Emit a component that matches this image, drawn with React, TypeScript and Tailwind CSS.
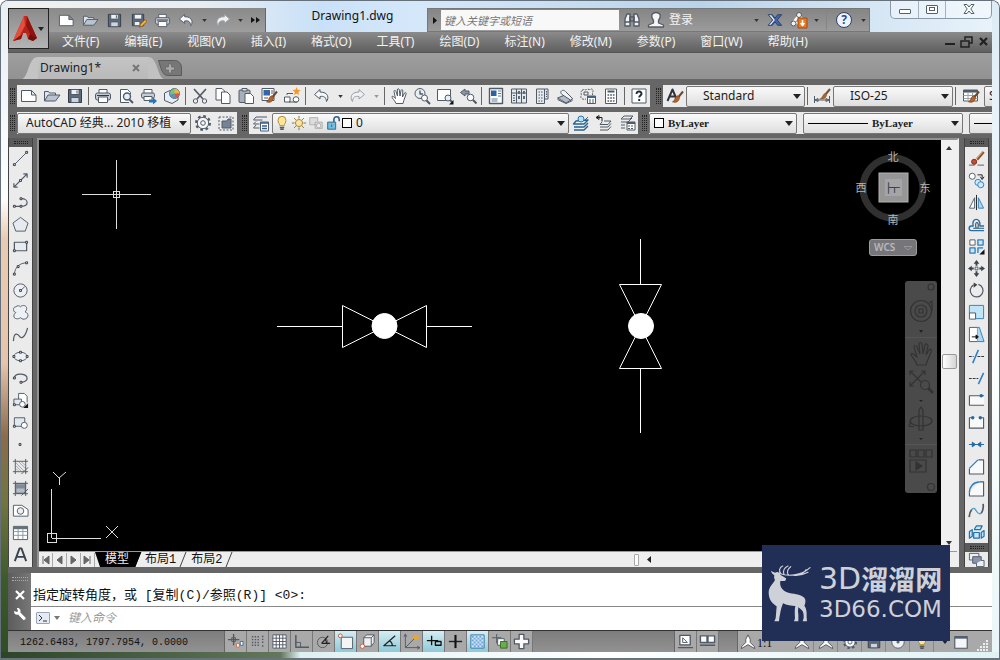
import React from "react";

type Kids = { children?: React.ReactNode };

function Ic({ children, className = "size-[18px]", box = 18 }: Kids & { className?: string; box?: number }) {
  return (
    <svg viewBox={`0 0 ${box} ${box}`} className={`${className} shrink-0`} fill="none" stroke="#515b67" strokeWidth="1" strokeLinejoin="round" aria-hidden="true">
      {children}
    </svg>
  );
}

const Sq = ({ x, y }: { x: number; y: number }) => <rect x={x - 1} y={y - 1} width="2" height="2" fill="#fff" stroke="#2f3842" />;

const Brush = () => (
  <g>
    <path d="M17 4.500 12.500 10" stroke="#6b4a30" strokeWidth="2" />
    <path d="M12.500 9c1.500 1 1 4-1 5.400-1.400 1-3.500 1.200-5 .4 1.800-.7 2-1.800 2.500-3.200.6-1.700 2-3.200 3.500-2.600z" fill="#b5642a" stroke="#7a3f18" strokeWidth=".7" />
  </g>
);

const icons: Record<string, React.ReactNode> = {
  new: <path d="M1.500 3.500h10l4.500 4.500v6.500h-14.500zM11.500 3.500V8H16" fill="#fff" />,
  open: <><path d="M1.500 14V4.500h4l1 1.500h6V8" fill="#dfe5ec" /><path d="M1.500 14 5 8h12l-4.500 6z" fill="#b9c4d0" /></>,
  save: <><path d="M2.500 2.500h13v13h-13z" fill="#5e6b7c" stroke="#333c48" /><path d="M5 2.500h8v5H5z" fill="#eef2f6" /><path d="M5 10.500h8v5H5z" fill="#cdd5de" /><path d="M11 3.500v3" /></>,
  saveAs: <><path d="M2.500 2.500h12v12h-12z" fill="#5e6b7c" stroke="#333c48" /><path d="M4.500 2.500h8v5h-8zM4.500 10h6v4.500h-6z" fill="#eef2f6" /><path d="m10 16 1-3 5-5 2 2-5 5z" fill="#f4b544" stroke="#8a5a10" /></>,
  print: <><path d="M5 6V2.500h8V6" fill="#fff" /><rect x="1.500" y="6" width="15" height="7" rx="2" fill="#c5ccd5" /><path d="M4.500 10h9v5.500h-9z" fill="#fff" /><path d="M3 8.500h12" stroke="#313a45" /></>,
  preview: <><path d="M12 15.500H3.500v-13h7l3 3V7" fill="#fff" /><circle cx="10" cy="9.500" r="3.500" fill="#e3f0f8" strokeWidth="1.400" /><path d="m12.500 12.500 3.500 3.500" strokeWidth="2" /></>,
  publish: <><path d="M4 6V2.500h8V6" fill="#fff" /><rect x="1.500" y="6" width="13" height="5" rx="1.500" fill="#c5ccd5" /><path d="M4 9.500h8v4H4z" fill="#fff" /><path d="M9 12.500h4v-2l4 3.500-4 3.500v-2H9z" fill="#2673b8" stroke="none" /></>,
  threeD: <><path d="M1.500 6 7 3.500l8 2V13l-6 3.500-7.500-3z" fill="#e7edf2" /><circle cx="11.500" cy="6.500" r="5" fill="#7fc17a" stroke="#51708a" /><path d="M11.500 1.700a4.800 4.800 0 0 1 4.800 4.800h-4.800z" fill="#eab83e" stroke="none" /><path d="M11.500 6.500h4.800a4.800 4.800 0 0 1-4.800 4.800z" fill="#dd5548" stroke="none" /><path d="M11.500 6.500v4.800A4.800 4.800 0 0 1 7 7.500z" fill="#4c93d4" stroke="none" /></>,
  cut: <><path d="m3 2 9 10M15 2 6 12" strokeWidth="1.700" /><circle cx="4.500" cy="14" r="2.200" /><circle cx="13.500" cy="14" r="2.200" /></>,
  copy: <><path d="M2 1.500h6l2.500 2.500v9H2z" fill="#fff" /><path d="M7.500 5h5.500l3 3v8.500H7.500z" fill="#fff" /></>,
  paste: <><rect x="2" y="3" width="11" height="12.500" rx="1" fill="#a7b0ba" /><path d="M5 1.500h5V4H5z" fill="#e3e6ea" /><path d="M8 6.500h5.500l3 3v7H8z" fill="#fff" /></>,
  match: <><path d="M2 1.500h12v12H2z" fill="#fff" /><path d="M3.500 3h6.500v5.500H3.500z" fill="#2f67a8" stroke="none" /><path d="M11 4h2M11 6h2M4 11h4" /><Brush /></>,
  block: <><path d="M1.500 10H7v5H1.500zM4 8V6.500h6" fill="#fff" /><circle cx="13" cy="12.500" r="2.800" fill="#fff" /><path d="M6 15h8" /><path d="m13.500 0 1.200 2.800 3 .2-2.300 2 .6 3-2.500-1.500L11 8l.8-3-2.300-2 3-.2z" fill="#f09a2b" stroke="none" /></>,
  undo: <path d="M7 2.500 1.500 7.500 7 12V9.500c4-.6 6 .5 6.500 5 2.500-3 2.300-9.500-6.500-9.500z" fill="#f5f7f9" />,
  redo: <path d="m11 2.500 5.500 5L11 12V9.500c-4-.6-6 .5-6.500 5C2 11.500 2.200 5 11 5z" fill="#eef0f2" stroke="#9aa0a6" />,
  pan: <path d="M6 16.500c-1-3-4.500-5.500-4-7 .8-1 2.500 1 3.500 2L4 4.500c0-1.500 1.500-1.500 2 0L7.500 9 7.300 3c0-1.700 1.800-1.700 2 0L10 9l1-5.500c.4-1.500 2-1 1.800.5L12.500 10l2-4c.8-1 2-.3 1.600 1l-2.300 6.500-.8 3z" fill="#fff" />,
  zoomTime: <><circle cx="7" cy="6.500" r="5" fill="#e9eef2" /><path d="M7 3.500v3.500h3" strokeWidth="1.400" /><circle cx="11.500" cy="11" r="3" fill="#f9fbfc" /><path d="m13.500 13.500 3.500 3.500" strokeWidth="2" /></>,
  zoomWin: <><path d="M1.500 2.500h13v11h-13z" fill="#fff" /><circle cx="12" cy="11" r="3" fill="#e9eef2" /><path d="m14 13 2 2" strokeWidth="2" /><path d="M17.500 13v4.500H13z" fill="#111" stroke="none" /></>,
  zoomPrev: <><path d="M6 2 1.500 5.500 6 9V7h4V4H6z" fill="#8a95a2" /><circle cx="11.500" cy="10.500" r="3.300" fill="#f9fbfc" /><path d="m14 13 3.500 3.500" strokeWidth="2" /></>,
  props: <><path d="M2.500 1.500h13v15h-13z" fill="#fff" strokeWidth="1.400" /><path d="M4 3.500h5.500V9H4z" fill="#2b62a4" stroke="none" /><path d="M11 4h3M11 6.500h3M11 9h3M4.500 12h6M4.500 14h6" stroke="#4f7dab" /></>,
  design: <><path d="M1.500 2h15v14h-15z" fill="#e4e9ee" /><path d="M6.500 2v14M11.500 2v14M1.500 6h15M3 8.500h2M3 11h2M3 13.500h2" /><path d="M8 4h2v3H8zM13 4h2v3h-2zM8 9h2v3H8zM13 9h2v3h-2z" fill="#5d6c7d" stroke="none" /></>,
  palette: <><path d="M3.500 2h8v14.500h-8zM11.500 2H15v10h-3.500" fill="#e4e9ee" /><path d="M5.500 5h4M5.500 8h4M5.500 11h4M5.500 14h4M13.500 4v6" strokeDasharray="1.500 1" /></>,
  sheets: <><path d="M1.500 11 9 8l7.500 4-6.500 4z" fill="#b3bcc6" /><path d="M5 4.500C7 2 9 4 10 5l6.500 6.500-2 1.500L6 7.500c-1-1-1.500-2-1-3z" fill="#f2f4f6" /><path d="M1.500 12.500l8.500 4 6.500-3" /></>,
  markup: <><path d="M3 3.500c2-2 3 0 4.500-1 2-1 3 1 5-.5 1.500 0 2 2 1 3.500V8M3 3.500C1 5 3 7 2 9s1.500 4 5 3" strokeDasharray="2 1" /><path d="M5 5h4v3H5z" /><path d="M8.500 9h8v7.500h-8z" fill="#fff" /><path d="M8.500 10h8" strokeWidth="2" stroke="#41638b" /><path d="M10 13h2m1 0h2m-5 2h2m1 0h2" /></>,
  calc: <><path d="M3.500 2h11v14.500h-11z" fill="#fff" /><path d="M5.500 4.500h7" strokeWidth="2" /><path d="M5.500 8h7M5.500 11h7M5.500 14h7" strokeWidth="1.600" strokeDasharray="1.700 1" /></>,
  help: <><rect x="2" y="2" width="14" height="14" fill="#fff" /><path d="M6.500 7c0-3.500 5.500-3 5 0-.2 1.500-2.300 1.500-2.300 3.500M9.200 12v2" strokeWidth="1.900" stroke="#222b38" /></>,
  textStyle: <><path d="M1.500 14 6.500 2.500 11 13M3.500 9.500h6" stroke="#2d3540" strokeWidth="2" /><Brush /></>,
  dimStyle: <><path d="M1.500 9v7M16.500 9v7M2 13h14M2 13l3-1.500v3zM16 13l-3-1.500v3z" /><path d="m17 2-5 6" stroke="#77512f" strokeWidth="2" /><path d="m12 6 2 2c-1 4.500-4.500 5-8 4 3.500-1 3.500-5 6-6z" fill="#9f663c" stroke="none" /></>,
  tableStyle: <><path d="M1.500 3h14v11h-14z" fill="#fff" /><path d="M1.500 5.500h14M1.500 8.500h14M1.500 11.500h14M6 5v9M10.500 5v9" stroke="#9aa2ab" /><path d="M1.500 4h14" strokeWidth="2" /><Brush /></>,
  gear: <><circle cx="9" cy="9" r="6.800" strokeWidth="2.400" strokeDasharray="2.700 2.640" /><circle cx="9" cy="9" r="5.700" fill="#f6f7f8" /><circle cx="9" cy="9" r="2.300" /></>,
  wsSave: <><path d="M2 3h14v13H2z" strokeDasharray="2 1.500" /><path d="M5 7h5l1-2h3v9H5z" fill="#758494" /></>,
  layerProps: <><path d="M4 3h11M4 3 1.500 6h9M4 7.500 1.500 10h6M4 11l-2.500 3h6" /><path d="M8.500 8h8v9h-8z" fill="#fff" /><path d="M8.500 9h8M10 12h5M10 14.500h5" stroke="#315d91" strokeWidth="1.500" /></>,
  bulb: <><path d="M6.500 12c0-2-2-3-2-6a4.500 4.500 0 0 1 9 0c0 3-2 4-2 6z" fill="#ffe596" stroke="#a98532" /><path d="M6.500 14h5M7 16h4" strokeWidth="1.600" /></>,
  sun: <><path d="M9 1v3M9 14v3M1 9h3M14 9h3M3.500 3.500l2 2M12.500 12.500l2 2M14.500 3.500l-2 2M5.500 12.500l-2 2" stroke="#82682b" /><circle cx="9" cy="9" r="4" fill="#ffe596" stroke="#9b7c30" /></>,
  vp: <><path d="M10 11H2V3h9v4M8 8h8v7H8z" stroke="#aaa" fill="#ddd" /><circle cx="12" cy="12" r="2.500" stroke="#aaa" fill="#eee" /></>,
  lock: <><path d="M10 8V5c0-4 6-4 6 0v2" strokeWidth="1.800" stroke="#31618b" /><rect x="3" y="8" width="9" height="8" fill="#70bddf" stroke="#286387" /><path d="M7.500 10.500v3" /></>,
  layCur: <><path d="m4 7-2.500 3H12l4-4zM2 13h10l4-4M2 16h10l4-4" fill="#eef5fa" stroke="#2d608b" strokeWidth="1.400" /><circle cx="9" cy="5" r="3" fill="#b9dff3" stroke="#2a75a9" /><path d="m12 7 4-4" stroke="#2d608b" /></>,
  layPrev: <><path d="M7 8 5 10.500h8L16 7H9M5 13h8l3-3.500M5 16h8l3-3.500" /><path d="M1 3.500h6v4M1 3.500l3-2v4z" stroke="#222" /></>,
  layState: <><path d="M6 2h9l-3 3H3zM3 8h7l4-4M3 11h4M3 14h4" /><path d="M9 8h8v8H9z" fill="#fff" /><path d="M9 9h8" strokeWidth="2" /><path d="M10 12h2m1 0h2m-5 2.500h2m1 0h2" /></>,
  line: <><path d="M3 15 15 3" /><Sq x={2.5} y={15.5} /><Sq x={15.5} y={2.5} /></>,
  xline: <><path d="m2 16 14-14M2 12v4h4M12 2h4v4" strokeWidth="1.300" /><Sq x={9} y={9} /></>,
  pline: <><path d="M3 13h7c8 0 8-8 0-8" strokeWidth="1.300" /><Sq x={2.5} y={13} /><Sq x={9.5} y={13} /><Sq x={9.5} y={5} /></>,
  polygon: <path d="m9 1.500 8 6-3 8.500H4L1 7.500z" fill="#e7ebf0" />,
  rect: <><path d="M2.500 4.500h13v9h-13z" fill="#e7ebf0" strokeWidth="1.300" /><Sq x={2.5} y={13.5} /><Sq x={15.5} y={4.5} /></>,
  arc: <><path d="M2.500 15C3 8 8 3 15.500 3" /><Sq x={2.5} y={15} /><Sq x={6.5} y={7} /><Sq x={15.5} y={3} /></>,
  circle: <><circle cx="9" cy="9" r="7" fill="#edf0f4" /><path d="m9 9 4.500-4" /><Sq x={9} y={9} /></>,
  cloud: <path d="M4 9C.5 8 1 3 4 3c2-2 4-1 5 0 2-2.500 7-1.500 6.500 2 0 2-1 2-1.500 3.500 4 1 4 7-1 7.500-2 .5-3-1-4-1.500-2 2-7.500 1.500-7-2C2 11 3 10 4 9z" fill="#edf0f4" />,
  spline: <path d="M1.500 16C2 6 6 8 8 11s6 1 8.500-9" strokeWidth="1.300" />,
  ellipse: <><ellipse cx="9" cy="9" rx="7" ry="4.500" fill="#edf0f4" /><Sq x={9} y={4.5} /><Sq x={9} y={13.5} /><Sq x={2} y={9} /><Sq x={16} y={9} /></>,
  earc: <><path d="M2.500 8C4 2 16 4 16 9c0 2-3 3.500-6 4" strokeWidth="1.300" /><Sq x={2.5} y={8.5} /><Sq x={9.5} y={13} /></>,
  insert: <><path d="M7 9V1.500h6l3 3V11" fill="#fff" /><path d="M2 7.500h8v6H2z" fill="#e1e8ee" /><circle cx="11" cy="13" r="3" fill="#fff" /><Sq x={2.5} y={13.5} /><path d="M17 12v5h-5z" fill="#111" stroke="none" /></>,
  mkblock: <><path d="M2.500 4h11v9h-11z" fill="#e1e8ee" /><circle cx="13" cy="12" r="3.200" fill="#fff" /><Sq x={2.5} y={13} /></>,
  point: <Sq x={8.5} y={9} />,
  hatch: <><path d="M3.500 1v16M14.500 1v16M1 3.500h16M1 14.500h16" /><path d="m4 5 9 9M4 8l6 6M4 11l3 3M7 4l7 7M10 4l4 4" stroke="#8994a0" strokeWidth=".8" /><path d="m17 10-7 7" /></>,
  gradient: <><path d="M4 4h10v10H4z" fill="#b4bbc3" /><path d="M4 5h10v4H4z" fill="#818b96" stroke="none" /><path d="M3.500 1v16M14.500 1v16M1 3.500h16M1 14.500h16m0-5-7 7" /></>,
  region: <><path d="M1.500 3.500h9L17 8v7H1.500z" fill="#fff" /><circle cx="9" cy="9.500" r="3.500" fill="#eee" /></>,
  table: <><path d="M1.500 2.500h15v14h-15z" fill="#fff" /><path d="M1.500 4h15" strokeWidth="3" stroke="#65707d" /><path d="M1.500 8h15M1.500 12h15M6.500 5v11M11.500 5v11" stroke="#8b96a3" /></>,
  text: <path d="M3 16 8 2.500h2L15 16M5 11.500h8" stroke="#39424d" strokeWidth="2" />,
  erase: <><path d="M1 16h6m3 0h7" /><path d="m16.500 2-7 8" stroke="#8a5932" strokeWidth="3" /><path d="m15.500 1.500-7 8" stroke="#e0b287" strokeWidth="1.200" /><circle cx="6.500" cy="12.500" r="2.700" fill="#c94b2e" stroke="#7c2c1b" /></>,
  copyObj: <><circle cx="4.500" cy="4.500" r="3.200" fill="#fff" /><path d="M10 3h5v4m-2-2 2 3 2-3" stroke="#222" /><circle cx="10.500" cy="11" r="3.200" fill="#d4eafa" stroke="#2c7fc0" /><circle cx="13.500" cy="13.500" r="3.200" fill="#d4eafa" stroke="#2c7fc0" /></>,
  mirror: <><path d="M7 4v11H1.500z" fill="#fff" /><path d="M11 4v11h5.500z" fill="#aed9f4" stroke="#347fb5" /><path d="M9 1v16" stroke="#222" /></>,
  offset: <><path d="M17 15.500H3.500c-3 0-3-5 0-5h2C3 1.500 14 1 12.500 10.500H17" stroke="#2470a8" strokeWidth="1.500" /><path d="M17 13H5.500M8.500 12.500c-2-8 4-7 2 0" stroke="#33536d" strokeWidth="1.200" /></>,
  array: <><path d="M2 2h5.500v5.500H2z" fill="#fff" /><path d="M10.500 2H16v5.500h-5.500zM2 10.500h5.500V16H2zM10.500 16v-5.500H16" fill="#cae6f8" stroke="#2c7fc0" strokeWidth="1.400" /><path d="M17.500 12v5.500H12z" fill="#111" stroke="none" /></>,
  move: <><path d="M7.500 7.500h3v3h-3z" /><path d="M9 0 6 4h2v2h2V4h2zM9 18l-3-4h2v-2h2v2h2zM0 9l4-3v2h2v2H4v2zM18 9l-4-3v2h-2v2h2v2z" fill="#3c444e" stroke="none" /></>,
  rotate: <><path d="M6 3a6.800 6.800 0 1 0 5-.5" strokeWidth="1.300" /><path d="m6 .5 4 2.500-4 3z" fill="#444" stroke="none" /></>,
  scale: <><path d="M1.500 1.500h15v14H8V10H1.500z" fill="#c2e4f7" stroke="#3481b7" /><path d="M1.500 9.500H8V16H1.500z" fill="#fff" /></>,
  stretch: <><path d="M10 16.500H1.500v-15H10z" fill="#fff" /><path d="M10 1.500h2l5 15h-7" fill="#aed9f4" stroke="#347fb5" /><path d="M4 11.500h5M8.500 9.500 11 11.500l-2.500 2z" stroke="#111" fill="#111" /></>,
  trim: <><path d="M1 9h5M10 9h7" stroke="#24303c" strokeDasharray="3 1" /><path d="m5 16 6-14" stroke="#2e7fc4" strokeWidth="1.600" /></>,
  extend: <><path d="M1 9h10" stroke="#24303c" strokeDasharray="3 1" /><path d="m11 15 5.500-12" stroke="#2e7fc4" strokeWidth="1.600" /></>,
  breakPt: <><path d="M17 4H1.500v10H17" fill="#f9f9fa" strokeWidth="1.200" /><circle cx="14" cy="4" r="1.800" fill="#2468a8" stroke="none" /></>,
  breakTwo: <><path d="M5 4H1.500v11h15V4H13" fill="#f9f9fa" strokeWidth="1.200" /><circle cx="5" cy="4" r="1.800" fill="#2468a8" stroke="none" /><circle cx="13" cy="4" r="1.800" fill="#2468a8" stroke="none" /></>,
  join: <path d="M1 9h16M8 9 4.500 6.500v5zM10 9l3.500-2.500v5z" fill="#1f67a2" stroke="#1f67a2" />,
  chamfer: <><path d="M1.500 11v6h15V2H11" fill="#f7f9fb" strokeWidth="1.200" /><path d="m1.500 11 9-9" stroke="#2c7fc0" strokeWidth="1.400" /></>,
  fillet: <><path d="M1.500 13v4h15V2H12" fill="#f7f9fb" strokeWidth="1.200" /><path d="M1.500 13C1.500 7 6 2 12 2" stroke="#2c7fc0" strokeWidth="1.600" /></>,
  blend: <><path d="M1.500 16c-.5-3 1-6 2.500-8M14 12c2-3 2.500-6 2-10" strokeWidth="1.800" /><path d="M4 8c5-5 4 7 10 4" stroke="#4b9fd5" strokeWidth="1.500" /></>,
  explode: <><path d="M6 9h6v6H6zM7 5l2-3h6l-2 4H7zM1.500 8l3-2v7l-3 2zM14 9l3-2v6l-3 2z" fill="#c7e5f7" stroke="#2372ac" strokeWidth="1.300" /></>,
  order: <><path d="M1.500 2.500h10v7h-10z" fill="#eee" /><path d="M5 6h9v7H5z" fill="#8995ad" /><path d="M9 13v3.500h8V10h-3" fill="#eee" /></>,
  snapInf: <><path d="M7 1v12M1 7h12" strokeWidth="1.500" /><path d="M5 5h4v4H5z" /><path d="M10 11h3v4h-3z" stroke="#d0713b" fill="#fff" /><path d="M14 9h3v4h-3z" stroke="#3a6c99" fill="#fff" /></>,
  snap: <path d="M3 4h9M3 7h9M3 10h9M3 13h9M14.500 3v8M14.500 13v2" strokeDasharray="1.500 1.500" strokeWidth="1.500" />,
  grid: <><path d="M2 2h14v14H2z" fill="#fff" /><path d="M2 5.500h14M2 9h14M2 12.500h14M5.500 2v14M9 2v14M12.500 2v14" /></>,
  ortho: <><path d="M3 2v13h14" strokeWidth="1.600" /><path d="M3 10h5v5" /></>,
  polar: <><circle cx="8" cy="10" r="5.500" /><path d="M7 11h9M7 11l7-8M11 6.500 12.500 11" stroke="#222" strokeWidth="1.300" /></>,
  osnap: <><path d="M4.500 4.500h12v12h-12z" fill="#f4f4f4" /><circle cx="3.500" cy="3" r="2" stroke="#d15630" fill="#fff" /></>,
  osnap3: <><path d="m5 5 3-3h8v8l-3 4H5zM5 5h8v9M13 5l3-3" fill="#f0f0f1" /><circle cx="3.500" cy="14" r="2.300" stroke="#d15630" fill="#fff" /></>,
  otrack: <path d="M15 3 3 13.500h13M9 8.500c2.500 1 3 3 3 5" stroke="#222" strokeWidth="1.300" />,
  ducs: <><path d="M2.500 2v13.500H17M2.500 15.500 13 5M1 4l1.500-3L4 4m11 10 3 1.500-3 1.500" /><path d="m13 1 1 2 3-1-1 3 1 2-3-.5L12 8l-.5-3-2-1.500 3 0z" fill="#f3a51f" stroke="none" /></>,
  dyn: <path d="M7 3v10M2 8h12M11 9h6v4h-6z" stroke="#111" strokeWidth="1.400" />,
  lwt: <><path d="M2 9h14" stroke="#222" strokeWidth="1.500" /><path d="M9 2v14" stroke="#111" strokeWidth="2.200" /></>,
  tpy: <><path d="M2 2h14v14H2z" fill="#cfe5f7" stroke="#3671a8" /><path d="M3 4h12M3 8h12M3 12h12" stroke="#6fa8d8" strokeDasharray="2 2" strokeWidth="2" /><path d="M5 6h10M5 10h10M5 14h10" stroke="#6fa8d8" strokeDasharray="2 2" strokeWidth="2" /></>,
  qp: <><path d="M6 1v10M1 5h10" /><path d="M7 6h7v7H7z" fill="#fff" /><path d="M10 9h7v7h-7z" fill="#69ae4a" stroke="#376c25" /></>,
  cycle: <path d="M6.500 1.500h5v5h5v5h-5v5h-5v-5h-5v-5h5z" fill="#fbfbfb" strokeWidth="1.400" />,
  model: <><path d="M3 2.500h11v10H3zM1 15.500h16" fill="#fff" strokeWidth="1.400" /><path d="M6 5v5h5z" /></>,
  layouts: <path d="M1.500 3h7v7h-7zM9.500 3h7v7h-7zM1 13h16" fill="#fff" strokeWidth="1.500" />,
  anno: <path d="M9 1 6.500 6v3.500L2 14l-.5 2.500L9 12l7.500 4.500L16 14l-4.500-4.500V6z" fill="#fff" stroke="#4a4f55" />,
  win: <><path d="M2 3h14v13H2z" fill="#f4f6fa" strokeWidth="1.300" /><path d="M2 4h14" stroke="#555f6e" strokeWidth="2.500" /></>,
  binoc: <><path d="M2 15V8l2-5h3v12zM16 15V8l-2-5h-3v12z" fill="#f3f3f3" strokeWidth="1.400" /><path d="M7 6h4v4H7zM2 11h5M11 11h5" strokeWidth="1.400" /></>,
  user: <path d="M6.500 12V9.500C3 5 5 1.500 9 1.500s6 3.500 2.500 8V12l5 2v2H1.500v-2z" fill="#f5f5f5" strokeWidth="1.300" />,
  xchg: <><path d="M1.500 3H6l3 4 3-4h4.500L11.500 9l5 6H12l-3-4-3 4H1.500l5-6z" fill="#4167ab" stroke="#243a6b" /><path d="M1.500 3H5l4.500 6-5 6h-3l5-6z" fill="#dbe4f4" stroke="#334a78" /></>,
  a360: <><path d="m9 4-6 8h7M9 4l3 4" stroke="#fff" strokeWidth="2.500" /><circle cx="9" cy="4" r="2.500" fill="#eef2f6" /><circle cx="3.500" cy="12.500" r="2.500" fill="#eef2f6" /><path d="M8 7h9v10H8z" fill="#e77a24" stroke="#a44b10" /><path d="M12.500 9v5m-2-2 2 2.500 2-2.500" stroke="#fff" strokeWidth="1.500" /></>,
  wrench: <path d="M5 1.500 6.500 5 5 6.500 1.500 5C1 8 3 10.500 6.500 9.800l6.500 6.700c2 1 4-1 3-3L9.500 7C10.500 3.500 8 1 5 1.500z" fill="#fff" stroke="none" />,
};

function Tool({ name, size = "w-[23px] h-[22px]", dim = "size-[18px]" }: { name: string; size?: string; dim?: string }) {
  return (
    <button type="button" aria-label={name} className={`flex ${size} shrink-0 items-center justify-center hover:bg-sky-100/40`}>
      <Ic className={dim}>{icons[name]}</Ic>
    </button>
  );
}

function Caret({ className = "fill-[#222]" }: { className?: string }) {
  return (
    <svg viewBox="0 0 8 5" className={`h-[5px] w-2 shrink-0 ${className}`} aria-hidden="true">
      <path d="M0 0h8L4 5z" />
    </svg>
  );
}

function More({ label, className = "", tone = "fill-[#333]" }: { label: string; className?: string; tone?: string }) {
  return (
    <button type="button" aria-label={label} className={`flex h-full shrink-0 items-center justify-center ${className}`}>
      <svg viewBox="0 0 6 4" className={`h-[3px] w-[5px] ${tone}`} aria-hidden="true"><path d="M0 0h6L3 4z" /></svg>
    </button>
  );
}

const Sep = () => <span className="mx-[2px] h-[18px] w-px shrink-0 self-center bg-[#666]" />;

const Grip = () => (
  <span className="flex w-[9px] shrink-0 items-center justify-center gap-px">
    <i className="h-4 border-l border-dotted border-[#222]" />
    <i className="h-4 border-l border-dotted border-[#222]" />
    <i className="h-4 border-l border-dotted border-[#222]" />
  </span>
);

const GripTop = () => (
  <div className="flex h-[9px] w-full shrink-0 flex-col items-center justify-center gap-px bg-[#5a5a5a]">
    <i className="w-[14px] border-t border-dotted border-[#222]" />
    <i className="w-[14px] border-t border-dotted border-[#222]" />
  </div>
);

function Combo({ label, value, className, text = "pl-2 text-[12px]", before }: { label: string; value: string; className: string; text?: string; before?: React.ReactNode }) {
  return (
    <div className={`relative flex h-[21px] shrink-0 items-center self-center rounded-[2px] border border-[#777] bg-gradient-to-b from-[#fafafa] to-[#dedede] ${className}`}>
      {before}
      <select aria-label={label} className={`h-full min-w-0 flex-1 appearance-none bg-transparent text-[#1c1c1c] outline-none ${text}`}>
        <option>{value}</option>
      </select>
      <span className="pointer-events-none absolute right-[3px] top-[7px]"><Caret /></span>
    </div>
  );
}

const serif = "font-['Liberation_Serif','Noto_Sans_CJK_SC',serif] font-semibold text-[11px]";
const panel = "flex h-[22px] shrink-0 items-center bg-[#ebebeb]";

const menus = ["文件(F)", "编辑(E)", "视图(V)", "插入(I)", "格式(O)", "工具(T)", "绘图(D)", "标注(N)", "修改(M)", "参数(P)", "窗口(W)", "帮助(H)"];
const drawTools = ["line", "xline", "pline", "polygon", "rect", "arc", "circle", "cloud", "spline", "ellipse", "earc", "insert", "mkblock", "point", "hatch", "gradient", "region", "table", "text"];
const modifyTools = ["erase", "copyObj", "mirror", "offset", "array", "move", "rotate", "scale", "stretch", "trim", "extend", "breakPt", "breakTwo", "join", "chamfer", "fillet", "blend", "explode"];
const statusTools: [string, boolean][] = [["snapInf", false], ["snap", false], ["grid", false], ["ortho", false], ["polar", false], ["osnap", true], ["osnap3", false], ["otrack", true], ["ducs", false], ["dyn", true], ["lwt", false], ["tpy", true], ["qp", false], ["cycle", false]];

function TitleBar() {
  return (
    <div className="flex h-6 pl-[41px]">
      <div className="flex w-[217px] shrink-0 items-center border-r border-[#666] bg-gradient-to-b from-[#8a8a8a] to-[#9d9d9d] pl-[5px]">
        {["new", "open", "save", "saveAs", "print", "undo"].map((n) => <Tool key={n} name={n} size="w-6 h-[22px]" dim="size-[17px]" />)}
        <More label="undo list" className="w-3" />
        <Tool name="redo" size="w-6 h-[22px]" dim="size-[17px]" />
        <More label="redo list" className="w-3" />
        <button type="button" aria-label="more commands" className="flex w-5 items-center justify-center">
          <svg viewBox="0 0 9 6" className="h-[6px] w-[9px] fill-[#111]"><path d="m0 0 4 3-4 3zM5 0l4 3-4 3z" /></svg>
        </button>
      </div>
      <h1 className="-mt-1 min-w-0 flex-1 truncate pl-3 text-center text-[12px] leading-6 text-[#111]">Drawing1.dwg</h1>
      <div className="flex w-[443px] shrink-0 items-center border border-[#777] bg-gradient-to-b from-[#858585] to-[#9b9b9b]">
        <button type="button" aria-label="collapse search" className="flex w-[13px] justify-center">
          <svg viewBox="0 0 4 7" className="h-[7px] w-1 fill-[#111]"><path d="m0 0 4 3.500L0 7z" /></svg>
        </button>
        <input aria-label="搜索" placeholder="键入关键字或短语" className="h-5 w-[178px] shrink-0 bg-[#f8f8f8] px-[3px] text-[11px] italic outline-none placeholder:text-[#777]" />
        <span className="w-[1px]" />
        <Tool name="binoc" size="w-6 h-5" />
        <button type="button" className="flex items-center gap-1 pl-[3px] text-[12px] text-[#f4f4f4]"><Ic>{icons.user}</Ic>登录</button>
        <span className="flex-1" />
        <More label="account menu" className="w-3" />
        <Tool name="xchg" size="w-[26px] h-5" dim="size-4" />
        <Tool name="a360" size="w-[22px] h-5" />
        <More label="apps menu" className="w-3" />
        <i className="mx-1 h-5 w-px bg-[#858585]" />
        <button type="button" aria-label="help" className="mx-[5px] flex size-4 shrink-0 items-center justify-center rounded-full border border-[#2d3f6e] bg-[#eef3fa] text-[12px] font-bold leading-none text-[#2b4a94]">?</button>
        <More label="help menu" className="w-3" />
      </div>
      <div className="-mt-2 flex w-[122px] shrink-0 justify-end self-start">
        <div className="flex h-[19px] w-[102px] rounded-b-[5px] border border-t-0 border-[#8b9aab] bg-white/40">
          <button type="button" aria-label="minimize" className="flex w-7 items-center justify-center border-r border-[#a5b1bf]"><i className="mt-1 h-[5px] w-3 rounded-[1px] border border-[#55606d] bg-white" /></button>
          <button type="button" aria-label="maximize" className="flex w-[27px] items-center justify-center border-r border-[#a5b1bf]"><i className="flex h-[9px] w-3 items-center justify-center rounded-[1px] border border-[#55606d] bg-white"><b className="h-[4px] w-[6px] border border-[#55606d]" /></i></button>
          <button type="button" aria-label="close" className="flex flex-1 items-center justify-center">
            <svg viewBox="0 0 12 10" className="h-[10px] w-3" fill="#fff" stroke="#55606d"><path d="M1 .5h3L6 3l2-2.500h3L7.800 5 11 9.500H8L6 7 4 9.500H1L4.200 5z" /></svg>
          </button>
        </div>
      </div>
    </div>
  );
}

function MenuBar() {
  return (
    <nav className="flex h-[21px] items-center gap-[25px] border-b border-[#555] bg-gradient-to-b from-[#8b8b8b] to-[#5f5f5f] pl-[54px] text-[12px] text-[#f2f2f2]">
      {menus.map((m) => <button key={m} type="button" className="shrink-0 leading-5">{m}</button>)}
      <span className="flex-1" />
      <svg viewBox="0 0 44 14" className="mr-1 h-[14px] w-11 shrink-0" fill="none" stroke="#202020" strokeWidth="2" aria-hidden="true">
        <path d="M1 9h10" /><path d="M17 6h8v6h-8zM21 5V2h7v6h-3" strokeWidth="1.500" /><path d="m36 3 7 7M43 3l-7 7" strokeWidth="2.200" />
      </svg>
    </nav>
  );
}

function FileTabs() {
  return (
    <div className="flex h-[26px] items-end bg-gradient-to-b from-[#9e9e9e] to-[#929292] pl-[14px]">
      <svg viewBox="0 0 16 22" className="h-[22px] w-4 fill-[#c4c4c4]" aria-hidden="true"><path d="M0 22C7 20 6 0 16 0v22z" /></svg>
      <div className="flex h-[22px] w-[110px] items-center justify-between bg-gradient-to-b from-[#c4c4c4] to-[#b9b9b9] pl-[2px] pr-2 text-[12px] text-[#222]">
        Drawing1*
        <button type="button" aria-label="close tab"><svg viewBox="0 0 8 8" className="size-2" stroke="#777" strokeWidth="2"><path d="m1 1 6 6M7 1 1 7" /></svg></button>
      </div>
      <svg viewBox="0 0 16 22" className="h-[22px] w-4 fill-[#c1c1c1]" aria-hidden="true"><path d="M16 22C9 20 10 0 0 0v22z" /></svg>
      <button type="button" aria-label="new tab" className="-ml-[6px] mb-[3px]">
        <svg viewBox="0 0 24 16" className="h-4 w-6" fill="#777" stroke="#5a5a5a"><path d="M.5.500h16c4 0 7 3 7 7.500v7.500H10C4 15.500 3 8 .5.500z" /><path d="M10.500 4h3v3h3v3h-3v3h-3v-3h-3V7h3z" fill="#aaa" stroke="#666" strokeWidth=".7" /></svg>
      </button>
    </div>
  );
}

function Toolbars() {
  const t = (names: string[]) => names.map((n) => <Tool key={n} name={n} />);
  return (
    <div className="flex flex-col gap-[5px] overflow-hidden bg-[#666] pb-1 pt-[6px]">
      <div className="flex h-[22px]">
        <Grip />
        <div className={panel}>
          {t(["new", "open", "save"])}<Sep />{t(["print", "preview", "publish", "threeD"])}<Sep />{t(["cut", "copy", "paste", "match", "block"])}<Sep />
          <Tool name="undo" size="w-7 h-[22px]" /><More label="undo steps" className="w-2" />
          <Tool name="redo" size="w-[26px] h-[22px]" /><More label="redo steps" className="w-3" tone="fill-[#999]" /><Sep />
          {t(["pan", "zoomTime", "zoomWin", "zoomPrev"])}<Sep />{t(["props", "design", "palette", "sheets", "markup", "calc"])}<Sep />{t(["help"])}
        </div>
        <span className="w-1 shrink-0" /><Grip />
        <div className={`${panel} min-w-0 flex-1 overflow-hidden`}>
          <Tool name="textStyle" /><Combo label="文字样式" value="Standard" className="w-[119px]" text="pl-4 text-[12px]" /><Sep />
          <Tool name="dimStyle" /><Combo label="标注样式" value="ISO-25" className="w-[120px]" text="pl-4 text-[12px]" /><Sep />
          <Tool name="tableStyle" size="w-[26px] h-[22px]" /><Combo label="表格样式" value="Standard" className="w-[120px]" text="pl-1 text-[12px]" />
        </div>
      </div>
      <div className="flex h-[22px]">
        <Grip />
        <div className={panel}><Combo label="工作空间" value="AutoCAD 经典... 2010 移植" className="w-[174px]" />{t(["gear", "wsSave"])}</div>
        <span className="w-[3px] shrink-0" /><Grip />
        <div className={panel}>
          <Tool name="layerProps" />
          <Combo label="图层" value="0" className="w-[297px]" text="pl-1 text-[12px]" before={
            <span className="flex items-center gap-px pl-px">
              {["bulb", "sun", "vp", "lock"].map((n) => <Ic key={n} className="size-4">{icons[n]}</Ic>)}
              <i className="size-[10px] border border-black bg-white" />
            </span>
          } />
          {t(["layCur", "layPrev", "layState"])}
        </div>
        <span className="w-[2px] shrink-0" /><Grip />
        <div className={`${panel} min-w-0 flex-1 gap-[6px] overflow-hidden`}>
          <Combo label="颜色" value="ByLayer" className="w-[148px]" text={`pl-1 ${serif}`} before={<i className="ml-1 size-[10px] border border-black bg-white" />} />
          <Combo label="线型" value="ByLayer" className="w-[160px]" text={`pl-1 ${serif}`} before={<i className="ml-1 h-px w-[60px] bg-black" />} />
          <Combo label="线宽" value="ByLayer" className="w-[160px]" text={`pl-1 ${serif}`} before={<i className="ml-1 h-px w-[60px] bg-black" />} />
        </div>
      </div>
    </div>
  );
}

function Drawing() {
  return (
    <svg className="absolute inset-0 h-full w-full" fill="none" stroke="#fff" shapeRendering="crispEdges" aria-hidden="true">
      <g stroke="#ddd"><path d="M77.500 20v69M43 54.500h69" /><path d="M74.500 51.500h6v6h-6z" /></g>
      <path d="M238 186.500h65M388 186.500h45" />
      <g shapeRendering="geometricPrecision"><path d="M303.500 165.500v42l84-42v42z" /><path d="M580.500 144.500h42l-42 84h42z" /></g>
      <path d="M601.500 99v45M601.500 228v65" />
      <g fill="#fff" shapeRendering="geometricPrecision"><circle cx="345.500" cy="186" r="12.500" /><circle cx="602" cy="186" r="12.500" /></g>
    </svg>
  );
}

function ViewCube() {
  return (
    <div className="absolute right-[10px] top-1 flex flex-col items-center gap-[6px]">
      <svg viewBox="-4 -5 84 89" className="h-[89px] w-[84px] -mx-1 font-['Noto_Sans_CJK_SC',sans-serif]" fill="#b5b5b5" fontSize="11" textAnchor="middle">
        <circle cx="38" cy="39" r="30" fill="none" stroke="#303030" strokeWidth="7" />
        <rect x="24" y="24" width="29" height="29" fill="#969696" stroke="#b2b2b2" />
        <rect x="30" y="30" width="17" height="17" fill="#a3a5a8" stroke="none" />
        <text x="38.500" y="44" fill="#3f4246" fontSize="13" transform="rotate(90 38.500 39)">上</text>
        <text x="38" y="12">北</text><text x="38" y="75">南</text><text x="6" y="43">西</text><text x="70" y="43">东</text>
      </svg>
      <button type="button" className="flex h-[17px] w-12 items-center justify-between rounded-[3px] border border-[#9a9a9f] bg-[#75757a] px-1 text-[10px] font-semibold text-[#b9b9bd]">
        WCS <svg viewBox="0 0 8 4" className="h-1 w-2" fill="none" stroke="#97979b"><path d="M0 .5h8L4 4z" /></svg>
      </button>
    </div>
  );
}

function NavBar() {
  return (
    <div className="absolute right-1 top-[141px]">
      <svg viewBox="0 0 32 212" className="h-[212px] w-8" fill="none" stroke="#333" strokeWidth="1.200" aria-hidden="true">
        <rect width="32" height="212" rx="3" fill="#4a4a4a" stroke="none" />
        <circle cx="26" cy="6" r="3" /><circle cx="26" cy="206" r="3.500" />
        <circle cx="16" cy="30" r="10.500" /><circle cx="16" cy="30" r="6" /><path d="M14 28h4v4h-4zM24 22l3-2v10" />
        <path d="M0 56.500h32M0 163.500h32" stroke="#555" />
        <path d="m14 49 2 3 2-3zM14 119l2 2 2-2zM14 157l2 2 2-2z" fill="#222" stroke="none" />
        <path d="M12 84c-1-5-6-8-6-11 2-2 4 2 6 3l-3-10c0-2 2-2 3 0l3 7-1-10c0-2 3-2 3 0l1 10 2-9c1-2 3-1 3 1l-2 9 3-5c2-2 3 0 2 2l-4 10-1 3z" />
        <path d="m5 90 15 15M20 90 5 105M5 94v-4h4M16 90h4v4M5 101v4h4" /><circle cx="20" cy="104" r="4.500" fill="#4a4a4a" /><path d="m23 107 5 5" strokeWidth="2.500" />
        <ellipse cx="16" cy="140" rx="11" ry="5" /><path d="M14 129l2-3 2 3v20h-4zM6 140l-2 5 5 1" />
        <path d="M5 169h6v7H5zM13 169h6v7h-6zM21 169h6v7h-6zM5 179h16v12H5z" /><path d="m11 181 6 4-6 4z" fill="#333" />
      </svg>
    </div>
  );
}

function LayoutTabs() {
  return (
    <div className="flex h-4 items-center overflow-hidden border-t border-[#999] bg-[#eee] font-['Liberation_Mono','Noto_Sans_CJK_SC',monospace] text-[12px] leading-[14px] text-[#111]">
      {["M3 1v8M9 1v8L4 5z", "M8 1v8L3 5z", "M3 1v8l5-4z", "M2 1v8l5-4zM8 1v8"].map((d, i) => (
        <button key={d} type="button" aria-label={["first", "previous", "next", "last"][i]} className="flex h-[14px] w-[14px] shrink-0 items-center justify-center border-r border-[#aaa]">
          <svg viewBox="0 0 11 10" className="h-[10px] w-[11px]" fill="#666" stroke="#666"><path d={d} /></svg>
        </button>
      ))}
      <svg viewBox="0 0 10 15" className="h-[15px] w-[10px] shrink-0"><path d="M0 0h10v15H5z" fill="#000" /></svg>
      <button type="button" className="h-full shrink-0 bg-black text-[#eee]">模型</button>
      <svg viewBox="0 0 16 15" className="h-[15px] w-4 shrink-0"><path d="M0 0h13L7 15H0z" fill="#000" /><path d="M7 15 13 0" stroke="#fff" /></svg>
      <button type="button" className="h-full shrink-0">布局1</button>
      <svg viewBox="0 0 15 15" className="h-[15px] w-[15px] shrink-0" stroke="#444"><path d="M4 15 10 0" /></svg>
      <button type="button" className="h-full shrink-0">布局2</button>
      <svg viewBox="0 0 15 15" className="h-[15px] w-[15px] shrink-0" stroke="#444"><path d="M4 15 10 0" /></svg>
      <span className="flex-1" />
      <div className="flex h-full w-[323px] shrink-0 items-center gap-2 bg-[#efefef]">
        <i className="h-3 w-[5px] rounded-[1px] border border-[#aaa] bg-white" />
        <svg viewBox="0 0 4 7" className="h-[7px] w-1 fill-[#222]"><path d="M4 0v7L0 3.500z" /></svg>
      </div>
    </div>
  );
}

function Workspace() {
  return (
    <div className="flex flex-1 items-stretch bg-[#666]">
      <aside className="flex w-[25px] shrink-0 flex-col overflow-hidden border-x border-[#444] bg-[#ebebeb]">
        <GripTop />
        {drawTools.map((n) => <Tool key={n} name={n} size="w-[23px] h-[22px]" dim="size-[17px]" />)}
      </aside>
      <main className="ml-1 mr-[5px] flex min-w-0 flex-1 flex-col border-2 border-b-0 border-[#929292] border-r-[#eee]">
        <div className="flex flex-1">
          <div className="relative min-w-0 flex-1 overflow-hidden bg-black">
            <Drawing />
            <svg viewBox="0 0 90 90" className="absolute bottom-0 left-0 size-[90px]" fill="none" stroke="#ddd" aria-hidden="true">
              <path d="M8.500 72.500h9v9h-9zM12.500 28v49M13 77.500h49" shapeRendering="crispEdges" /><path d="m14 11 6 6 7-6M20.500 17v7M67 65l12 12M79 65 67 77" />
            </svg>
            <ViewCube />
            <NavBar />
          </div>
          <div className="flex w-4 shrink-0 flex-col items-center justify-between bg-[#f0f0f0] py-[6px]">
            <svg viewBox="0 0 6 4" className="h-1 w-[6px] fill-[#333]"><path d="m3 0 3 4H0z" /></svg>
            <i className="mt-8 h-[15px] w-[15px] rounded-[2px] border border-[#999] bg-gradient-to-r from-white to-[#d4d4d4]" />
            <svg viewBox="0 0 6 4" className="h-1 w-[6px] fill-[#333]"><path d="M0 0h6L3 4z" /></svg>
          </div>
        </div>
        <LayoutTabs />
      </main>
      <aside className="mr-[3px] flex w-[25px] shrink-0 flex-col overflow-hidden border-x border-[#444] bg-[#ebebeb]">
        <GripTop />
        {modifyTools.map((n) => <Tool key={n} name={n} size="w-[23px] h-[22px]" dim="size-[17px]" />)}
        <GripTop />
        <Tool name="order" size="w-[23px] h-[15px]" dim="size-[17px]" />
      </aside>
    </div>
  );
}

function CommandLine() {
  return (
    <section className="flex h-[63px] border-t-[6px] border-[#666]">
      <div className="flex w-[23px] shrink-0 flex-col items-center gap-[7px] bg-gradient-to-r from-[#5c5c5c] to-[#777] pt-1">
        <span className="flex flex-col gap-[2px]"><i className="w-4 border-t border-dotted border-[#aaa]" /><i className="w-4 border-t border-dotted border-[#aaa]" /></span>
        <button type="button" aria-label="close command line" className="pt-[2px]"><svg viewBox="0 0 10 10" className="size-[10px]" stroke="#fff" strokeWidth="2.200"><path d="m1 1 8 8M9 1 1 9" /></svg></button>
        <button type="button" aria-label="customize"><Ic className="size-[14px]">{icons.wrench}</Ic></button>
      </div>
      <div className="flex min-w-0 flex-1 flex-col bg-white">
        <p className="h-[34px] border-b border-[#888] pl-[2px] pt-[13px] font-['Liberation_Mono','Noto_Sans_CJK_SC',monospace] text-[13px] leading-5 text-[#111]">指定旋转角度，或 [复制(C)/参照(R)] &lt;0&gt;:</p>
        <label className="flex h-[22px] items-center gap-1 pl-[5px]">
          <span className="flex h-3 w-[14px] items-center justify-center rounded-[1px] border border-[#9aa6b8] bg-[#e6ebf3]">
            <svg viewBox="0 0 10 8" className="h-2 w-[10px]" fill="none" stroke="#333"><path d="m1 1 3 3-3 3M5 7h4" /></svg>
          </span>
          <svg viewBox="0 0 6 4" className="h-1 w-[6px] fill-[#777]"><path d="M0 0h6L3 4z" /></svg>
          <input aria-label="命令" placeholder="键入命令" className="ml-1 min-w-0 flex-1 text-[12px] italic outline-none placeholder:text-[#999]" />
        </label>
      </div>
    </section>
  );
}

function StatusBar() {
  const cell = "flex h-full w-[22px] shrink-0 items-center justify-center border-r border-[#777]";
  return (
    <footer className="flex h-[22px] items-center border-t border-[#333] bg-gradient-to-b from-[#7d7d7d] to-[#929292]">
      <output className="w-[216px] shrink-0 pl-3 pt-[2px] font-['Liberation_Mono',monospace] text-[10px] text-[#111]">1262.6483, 1797.7954, 0.0000</output>
      <div className="flex h-full border-l border-[#666]">
        {statusTools.map(([n, on]) => (
          <button key={n} type="button" aria-label={n} aria-pressed={on} className={`${cell} ${on ? "bg-gradient-to-b from-[#d4edf3] to-[#8fc9d8]" : "bg-[#a9a9a9]"}`}>
            <Ic className="size-[17px]">{icons[n]}</Ic>
          </button>
        ))}
      </div>
      <span className="flex-1" />
      <div className="flex h-full items-center border-l border-[#666] bg-[#a9a9a9]">
        {["model", "layouts"].map((n) => <button key={n} type="button" aria-label={n} className={cell}><Ic className="size-[17px]">{icons[n]}</Ic></button>)}
      </div>
      <div className="ml-[18px] flex h-full w-[255px] shrink-0 items-center border-l border-[#666] bg-[#a9a9a9]">
        <button type="button" className="flex w-[52px] shrink-0 items-center gap-px pl-[2px] font-['Liberation_Serif',serif] text-[12px] text-[#111]"><Ic className="size-4">{icons.anno}</Ic><span className="pt-[3px]">1:1</span></button>
        {["anno", "anno", "gear", "save", "circle", "bulb"].map((n, i) => <button key={i} type="button" aria-label={`${n} ${i}`} className="flex h-full w-6 shrink-0 items-center justify-center border-r border-[#888]"><Ic className="size-4">{icons[n]}</Ic></button>)}
        <span className="flex-1" />
        <Caret />
        <Tool name="win" size="h-5 w-6" dim="size-4" />
        <svg viewBox="0 0 12 12" className="ml-1 mr-[3px] size-3 shrink-0 self-end fill-[#eee]"><path d="M9 0h2v2H9zM6 3h2v2H6zM9 3h2v2H9zM3 6h2v2H3zM6 6h2v2H6zM9 6h2v2H9zM0 9h2v2H0zM3 9h2v2H3zM6 9h2v2H6zM9 9h2v2H9z" /></svg>
      </div>
    </footer>
  );
}

function Badge() {
  return (
    <div className="absolute bottom-[19px] right-[49px] flex h-24 w-[188px] items-center bg-[#212f57] pl-[6px] text-[#cfd1d8]">
      <svg viewBox="18 50 135 177" className="h-[59px] w-[45px] shrink-0" aria-hidden="true">
        <path d="M27 71l12 5c6-4 14-2 17 7l16 10c1 4-1 7-4 8l-13 0c-3 16 6 28 20 34 18 6 40 5 52 16 5 6 4 16 0 24 8 10 7 24 7 36l1 11h-13l3-10c0-10 0-18-6-24-5-4-8-6-10-9l-1 14c2 9 1 19 1 29h-13l3-9c0-11-2-20 1-37-12 0-26-2-37-8-7 16-8 30-11 44l-1 10H37l4-9 3-36c-12-8-24-18-24-42 0-16 14-26 19-37-3-4-3-9-2-14-4-3-8-6-10-12z" fill="#cfd1d8" />
        <path d="M52 78c24 10 66 8 92-17M56 78c-6-8-4-17 6-22M66 81c-4-10 0-19 12-25M80 84c-8-10-2-20 6-26M96 84c16 2 30-3 42-9M108 82c14-2 20-8 24-15" fill="none" stroke="#cfd1d8" strokeWidth="3.500" strokeLinecap="round" />
      </svg>
      <div className="ml-[6px] flex flex-col items-start whitespace-nowrap font-['DejaVu_Sans','Noto_Sans_CJK_SC',sans-serif]">
        <b className="flex items-center leading-8"><span className="text-[30px] font-normal">3D</span><span className="font-['Noto_Sans_CJK_SC',sans-serif] text-[27px] font-bold">溜溜网</span></b>
        <span className="text-[23px] font-normal leading-7">3D66.COM</span>
      </div>
    </div>
  );
}

export default function App() {
  return (
    <div className="relative flex min-h-screen flex-col overflow-hidden rounded-t-lg border-x border-t border-[#65707a] bg-[linear-gradient(90deg,#f1f1ee_0%,#e8edf2_20%,#c9e1f8_32%,#d5e8fa_42%,#b9d3ea_70%,#e9f3fb_100%)] px-[7px] pb-2 pt-[7px] font-['Noto_Sans','Noto_Sans_CJK_SC',sans-serif]">
      <i className="absolute inset-y-0 left-0 w-[7px] bg-[linear-gradient(#e8eef2_0%,#fff_30%,#e9cbb4_36%,#e4c4ad_55%,#8a6c4c_66%,#72753f_76%,#3c5a2c_88%,#2e4c26_100%)]" />
      <i className="absolute inset-y-0 right-0 w-[7px] bg-gradient-to-b from-[#dcebf6] via-white to-[#eaf5f7]" />
      <i className="absolute inset-x-0 bottom-0 h-2 border-b-2 border-[#68737a] bg-[linear-gradient(90deg,#2c4428_0%,#62775c_28%,#dff0f2_30%,#ffffff_60%,#dff2f4_100%)]" />
      <header className="relative">
        <TitleBar />
        <MenuBar />
        <button type="button" aria-label="AutoCAD" className="absolute left-0 top-0 flex size-[41px] items-center gap-px border border-[#222] bg-gradient-to-b from-[#8b8b8b] to-[#b4b4b4] pl-1">
          <svg viewBox="0 0 24 26" className="h-[26px] w-6" aria-hidden="true">
            <path d="M11 0h3l10 22-4 3-5-2-2-6-3 0-2 6-8 2z" fill="#c9281c" /><path d="M11 0 0 25l8-6 4-9z" fill="#e2503d" /><path d="m14 0 10 22-7-4-4-8z" fill="#8e120d" /><path d="m7 19 5-9 5 8-4-1h-3z" fill="#b3231a" /><path d="m0 25 8-6 2-2-2 6z" fill="#8e120d" /><path d="m15 23 2-5 7 4-4 3z" fill="#6e0f0b" />
          </svg>
          <svg viewBox="0 0 6 4" className="h-1 w-[6px] fill-[#222]"><path d="M0 0h6L3 4z" /></svg>
        </button>
      </header>
      <div className="relative flex flex-1 flex-col">
        <FileTabs />
        <Toolbars />
        <Workspace />
        <CommandLine />
        <StatusBar />
      </div>
      <Badge />
    </div>
  );
}
